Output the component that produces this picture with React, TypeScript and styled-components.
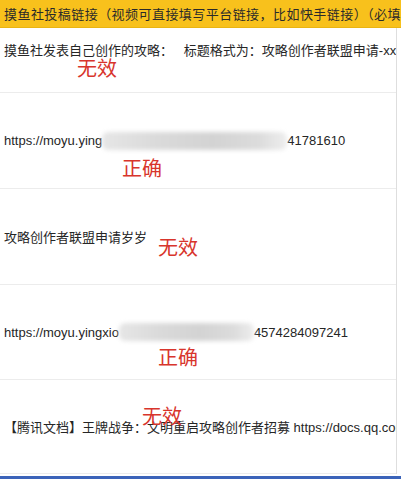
import React from "react";
import styled, { createGlobalStyle } from "styled-components";

const Global = createGlobalStyle`
  html, body { margin: 0; padding: 0; background: #ffffff; }
  body { width: 401px; height: 479px; overflow: hidden; }
`;

const Page = styled.div`
  width: 401px;
  height: 479px;
  display: flex;
  flex-direction: column;
  font-family: "Liberation Sans", "Noto Sans CJK SC", sans-serif;
  font-size: 13px;
  color: #262626;
  position: relative;
  overflow: hidden;
  background: #fff;
`;

const Header = styled.div`
  height: 27px;
  flex: 0 0 27px;
  background: #f8c11c;
  display: flex;
  align-items: center;
  padding-left: 4px;
  white-space: nowrap;
  overflow: hidden;
  letter-spacing: 0.45px;
  color: #2a2a2a;
  border-bottom: 1px solid #e9b412;
`;

const Table = styled.div`
  display: flex;
  flex-direction: column;
  width: 396px;
  border-right: 1px solid #dedede;
`;

const Row = styled.div<{ $h: number; $top?: boolean }>`
  position: relative;
  height: ${(p) => p.$h}px;
  flex: 0 0 ${(p) => p.$h}px;
  display: flex;
  align-items: ${(p) => (p.$top ? "flex-start" : "center")};
  padding: ${(p) => (p.$top ? "12px 0 0 4px" : "0 0 0 4px")};
  box-sizing: border-box;
  border-bottom: 1px solid #ececec;
  white-space: nowrap;
  overflow: hidden;
`;

const Cell = styled.span`
  display: inline-flex;
  align-items: center;
  white-space: nowrap;
`;

const Redact = styled.span<{ $w: number }>`
  display: inline-block;
  width: ${(p) => p.$w}px;
  height: 18px;
  background: linear-gradient(90deg, #e6e6e6 0%, #dadada 30%, #d3d3d3 60%, #dcdcdc 85%, #eeeeee 100%);
  filter: blur(2px);
  border-radius: 6px;
`;

const Mark = styled.span<{ $x: number; $y: number }>`
  position: absolute;
  left: ${(p) => p.$x}px;
  top: ${(p) => p.$y}px;
  font-family: "Noto Sans CJK SC", sans-serif;
  font-size: 20px;
  line-height: 20px;
  color: #d8352c;
  pointer-events: none;
`;

const BottomLine = styled.div`
  flex: 0 0 3px;
  height: 3px;
  background: #3b63b9;
  margin-top: auto;
`;

export default function App() {
  return (
    <>
      <Global />
      <Page>
        <Header>摸鱼社投稿链接（视频可直接填写平台链接，比如快手链接）（必填）</Header>
        <Table>
          <Row $h={65} $top>
            <Cell>摸鱼社发表自己创作的攻略：&nbsp;&nbsp;&nbsp;标题格式为：攻略创作者联盟申请-xx</Cell>
            <Mark $x={77} $y={30}>无效</Mark>
          </Row>
          <Row $h={96}>
            <Cell>
              https://moyu.ying<Redact $w={185} />41781610
            </Cell>
            <Mark $x={122} $y={65}>正确</Mark>
          </Row>
          <Row $h={96}>
            <Cell>攻略创作者联盟申请岁岁</Cell>
            <Mark $x={158} $y={48}>无效</Mark>
          </Row>
          <Row $h={95}>
            <Cell>
              https://moyu.yingxio<Redact $w={135} />4574284097241
            </Cell>
            <Mark $x={158} $y={62}>正确</Mark>
          </Row>
          <Row $h={94}>
            <Cell>【腾讯文档】王牌战争：文明重启攻略创作者招募 https://docs.qq.com/sheet</Cell>
            <Mark $x={142} $y={26}>无效</Mark>
          </Row>
        </Table>
        <BottomLine />
      </Page>
    </>
  );
}
